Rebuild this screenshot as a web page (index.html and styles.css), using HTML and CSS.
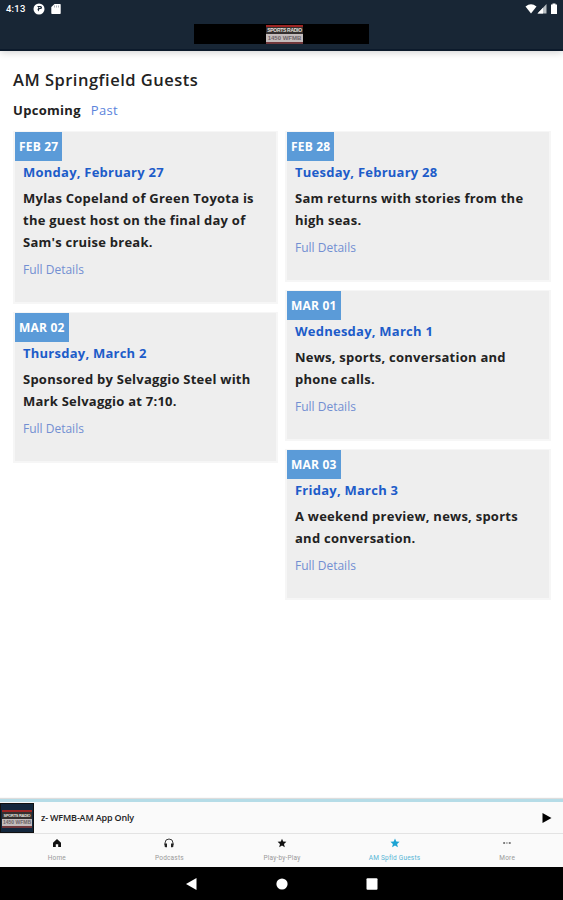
FILE: index.html
```html
<!DOCTYPE html>
<html lang="en">
<head>
    <meta charset="UTF-8">
    <meta name="viewport" content="width=device-width, initial-scale=1.0">
    <title>AM Springfield Guests</title>
    <link rel="stylesheet" href="styles.css">
</head>
<body>
    <header>
        <div class="status">
            <span class="time">4:13</span>
            <svg class="app-icon" width="12" height="12" viewBox="0 0 12 12">
                <circle cx="6" cy="6" r="5.5" fill="#fff"/>
                <path d="M4 3h3.500q1.500 0 1.500 1.500T7.500 6H6.500L5.500 8.500L4.500 6.500L5.500 4.500z" fill="#182635"/>
                <path d="M6.200 4h1.200v1H6.200z" fill="#fff"/>
            </svg>
            <svg width="10" height="12" viewBox="0 0 10 12">
                <path d="M3.500 1H9q.7 0 .7.700v8.600q0 .7-.7.700H1q-.7 0-.7-.700V4z" fill="#fff"/>
                <path d="M3.500 2.500v2M5.500 2.500v2M7.500 2.500v2" stroke="#8b949c" stroke-width=".7"/>
            </svg>
            <svg class="signal" width="34" height="12" viewBox="0 0 34 12">
                <path d="M.500 3.500Q6 -1 11.500 3.500L6 10.500z" fill="#fff"/>
                <path d="M12.500 10.500L21.500 1v9.500z" fill="#b9bfc4"/>
                <path d="M12.500 10.500L18 4.700v5.800z" fill="#fff"/>
                <path d="M26 1.500h1.500V.500h3v1H32v9.500h-6z" fill="#fff"/>
            </svg>
        </div>
        <div class="banner">
            <div class="logo"><b>SPORTS RADIO</b><i>1450 WFMB</i></div>
        </div>
    </header>

    <main>
        <h1>AM Springfield Guests</h1>
        <div class="tabs">
            <span>Upcoming</span>
            <a href="#">Past</a>
        </div>
        <div class="columns">
            <div class="column">
                <div class="card">
                    <div class="date">FEB 27</div>
                    <h2>Monday, February 27</h2>
                    <p>Mylas Copeland of Green Toyota is<br>the guest host on the final day of<br>Sam's cruise break.</p>
                    <a href="#">Full Details</a>
                </div>
                <div class="card">
                    <div class="date">MAR 02</div>
                    <h2>Thursday, March 2</h2>
                    <p>Sponsored by Selvaggio Steel with<br>Mark Selvaggio at 7:10.</p>
                    <a href="#">Full Details</a>
                </div>
            </div>
            <div class="column">
                <div class="card">
                    <div class="date">FEB 28</div>
                    <h2>Tuesday, February 28</h2>
                    <p>Sam returns with stories from the<br>high seas.</p>
                    <a href="#">Full Details</a>
                </div>
                <div class="card">
                    <div class="date">MAR 01</div>
                    <h2>Wednesday, March 1</h2>
                    <p>News, sports, conversation and<br>phone calls.</p>
                    <a href="#">Full Details</a>
                </div>
                <div class="card">
                    <div class="date">MAR 03</div>
                    <h2>Friday, March 3</h2>
                    <p>A weekend preview, news, sports<br>and conversation.</p>
                    <a href="#">Full Details</a>
                </div>
            </div>
        </div>
    </main>

    <div class="player">
        <div class="thumb">
            <div class="logo"><b>SPORTS RADIO</b><i>1450 WFMB</i></div>
        </div>
        <span>z- WFMB-AM App Only</span>
        <svg width="10" height="10" viewBox="0 0 10 10"><path d="M.500 0L9.500 5L.500 10z"/></svg>
    </div>

    <nav>
        <div class="item">
            <svg width="10" height="10" viewBox="0 0 10 10"><path d="M5 1L9 4.800V9H6.200V6.200H3.800V9H1V4.800z" fill="#111"/></svg>
            <span>Home</span>
        </div>
        <div class="item">
            <svg width="10" height="10" viewBox="0 0 10 10"><path d="M1 7V5a4 4 0 0 1 8 0v2" fill="none" stroke="#222" stroke-width=".9"/><path d="M.600 5.500h2.400V9.300H1.500L.600 8.500zM9.400 5.500H7V9.300h1.500l.9-.8z" fill="#222"/></svg>
            <span>Podcasts</span>
        </div>
        <div class="item">
            <svg width="10" height="10" viewBox="0 0 10 10"><path d="M5 .700L6.200 3.600L9.400 3.800L7 5.900L7.800 9.200L5 7.500L2.200 9.200L3 5.900L.600 3.800L3.800 3.600z" fill="#111"/></svg>
            <span>Play-by-Play</span>
        </div>
        <div class="item active">
            <svg width="10" height="10" viewBox="0 0 10 10"><path d="M5 .500L6.300 3.500L9.600 3.800L7.100 6L7.900 9.300L5 7.600L2.100 9.300L2.900 6L.400 3.800L3.700 3.500z" fill="#1ba3d3"/></svg>
            <span>AM Spfld Guests</span>
        </div>
        <div class="item">
            <svg width="10" height="10" viewBox="0 0 10 10"><path d="M1.200 4.300h1.900v1.500H1.200zM4.200 4.500h1.400v1H4.200zM6.800 4.300h1.900v1.500H6.800z" fill="#555"/></svg>
            <span>More</span>
        </div>
    </nav>

    <footer>
        <svg width="12" height="12" viewBox="0 0 12 12"><path d="M0 6L10.500 0v12z" fill="#fff"/></svg>
        <svg width="12" height="12" viewBox="0 0 12 12"><circle cx="6" cy="6" r="5.600" fill="#fff"/></svg>
        <svg width="12" height="12" viewBox="0 0 12 12"><rect x=".5" y=".3" width="11" height="11.400" rx="1" fill="#fff"/></svg>
    </footer>
</body>
</html>
```
FILE: styles.css
```css
* {
    box-sizing: border-box;
}
body {
    margin: 0;
    height: 900px;
    display: flex;
    flex-direction: column;
    font-family: "Open Sans", sans-serif;
    background-color: #fff;
    color: #222;
    overflow: hidden;
}
svg {
    display: block;
}
header {
    height: 51px;
    background-color: #182635;
    border-bottom: 2px solid #0c1a2b;
    box-shadow: 0 1px 8px rgba(0, 0, 0, 0.2);
}
.status {
    height: 24px;
    padding: 3px 4px 0 6px;
    display: flex;
    align-items: flex-start;
    color: #fff;
}
.time {
    width: 27px;
    font: 500 9.5px/12px Roboto, sans-serif;
    letter-spacing: 0.2px;
}
.app-icon {
    margin-right: 6px;
}
.signal {
    margin-left: auto;
}
.banner {
    width: 175px;
    height: 20px;
    margin: 0 0 0 194px;
    background-color: #000;
    display: flex;
    justify-content: center;
    align-items: center;
    padding-left: 6px;
}
.logo {
    width: 37px;
    height: 19px;
    background-color: #c4bcbc;
    border-top: 2px solid #9c2423;
    border-bottom: 2px solid #71383c;
    overflow: hidden;
    text-align: center;
    white-space: nowrap;
    font-family: "Liberation Sans", sans-serif;
}
.logo b {
    display: block;
    height: 7px;
    background-color: #35302f;
    color: #e5e0df;
    font-size: 5px;
    line-height: 7px;
    letter-spacing: -0.3px;
}
.logo i {
    display: block;
    color: #6d6468;
    font-size: 6px;
    font-style: normal;
    font-weight: bold;
    line-height: 8px;
}
main {
    flex: 1;
    padding: 17px 12px 0 13px;
}
h1 {
    margin: 0;
    font-size: 16.5px;
    line-height: 24px;
    font-weight: 600;
    letter-spacing: 0.5px;
}
.tabs {
    display: flex;
    gap: 10px;
    margin: 7px 0 10px;
    font-size: 13px;
    line-height: 22px;
    letter-spacing: 0.3px;
}
.tabs span {
    font-weight: 700;
}
a {
    color: #5b84dc;
    text-decoration: none;
}
.columns {
    display: flex;
    gap: 7px;
}
.column {
    width: 265px;
}
.column + .column {
    width: 266px;
}
.card {
    margin-bottom: 8px;
    padding-bottom: 21px;
    border: 2px solid #f6f6f6;
    border-top-width: 1px;
    background-color: #eee;
    line-height: 22px;
}
.date {
    width: fit-content;
    height: 29px;
    padding: 1px 4px 0;
    background-color: #5b9bd8;
    color: #fff;
    font-size: 12px;
    font-weight: 700;
    line-height: 28px;
    letter-spacing: 0.2px;
}
.card h2, .card p, .card a {
    display: block;
    margin: 0 0 4px 8px;
    font-size: 13px;
    font-weight: 700;
    letter-spacing: 0.24px;
}
.card h2 {
    color: #1d5cc9;
}
.card p {
    margin-bottom: 6px;
}
.card a {
    margin-bottom: 0;
    font-size: 12px;
    font-weight: 400;
    letter-spacing: 0;
    color: #728fd2;
}
.player {
    height: 35px;
    display: flex;
    align-items: center;
    padding-right: 11px;
    background-color: #fafafa;
    border-top: 3px solid #b5dce7;
    border-bottom: 1px solid #e3e3e3;
    box-shadow: 0 -1px 1px #ddd;
    font-size: 9px;
    font-weight: 600;
}
.player span {
    margin-left: 7px;
    letter-spacing: -0.17px;
}
.player > svg {
    margin-left: auto;
}
.thumb {
    width: 34px;
    height: 30px;
    padding: 6px 1px 0 1px;
    background-color: #13273d;
    border: 1px solid #111;
}
.thumb .logo {
    width: 30px;
    height: 18px;
}
.thumb b {
    font-size: 4px;
}
.thumb i {
    font-size: 5px;
    line-height: 7px;
}
nav {
    height: 33px;
    display: flex;
    background-color: #fafafa;
}
.item {
    flex: 1;
    display: flex;
    flex-direction: column;
    align-items: center;
    padding-top: 4px;
    padding-left: 1px;
    color: #999;
    font: 6.5px/8px Roboto, sans-serif;
    letter-spacing: 0.2px;
}
.item span {
    margin-top: 6px;
    white-space: nowrap;
}
.active {
    color: #56b5d5;
}
footer {
    height: 33px;
    display: flex;
    justify-content: center;
    align-items: center;
    gap: 78px;
    background-color: #000;
}
```
